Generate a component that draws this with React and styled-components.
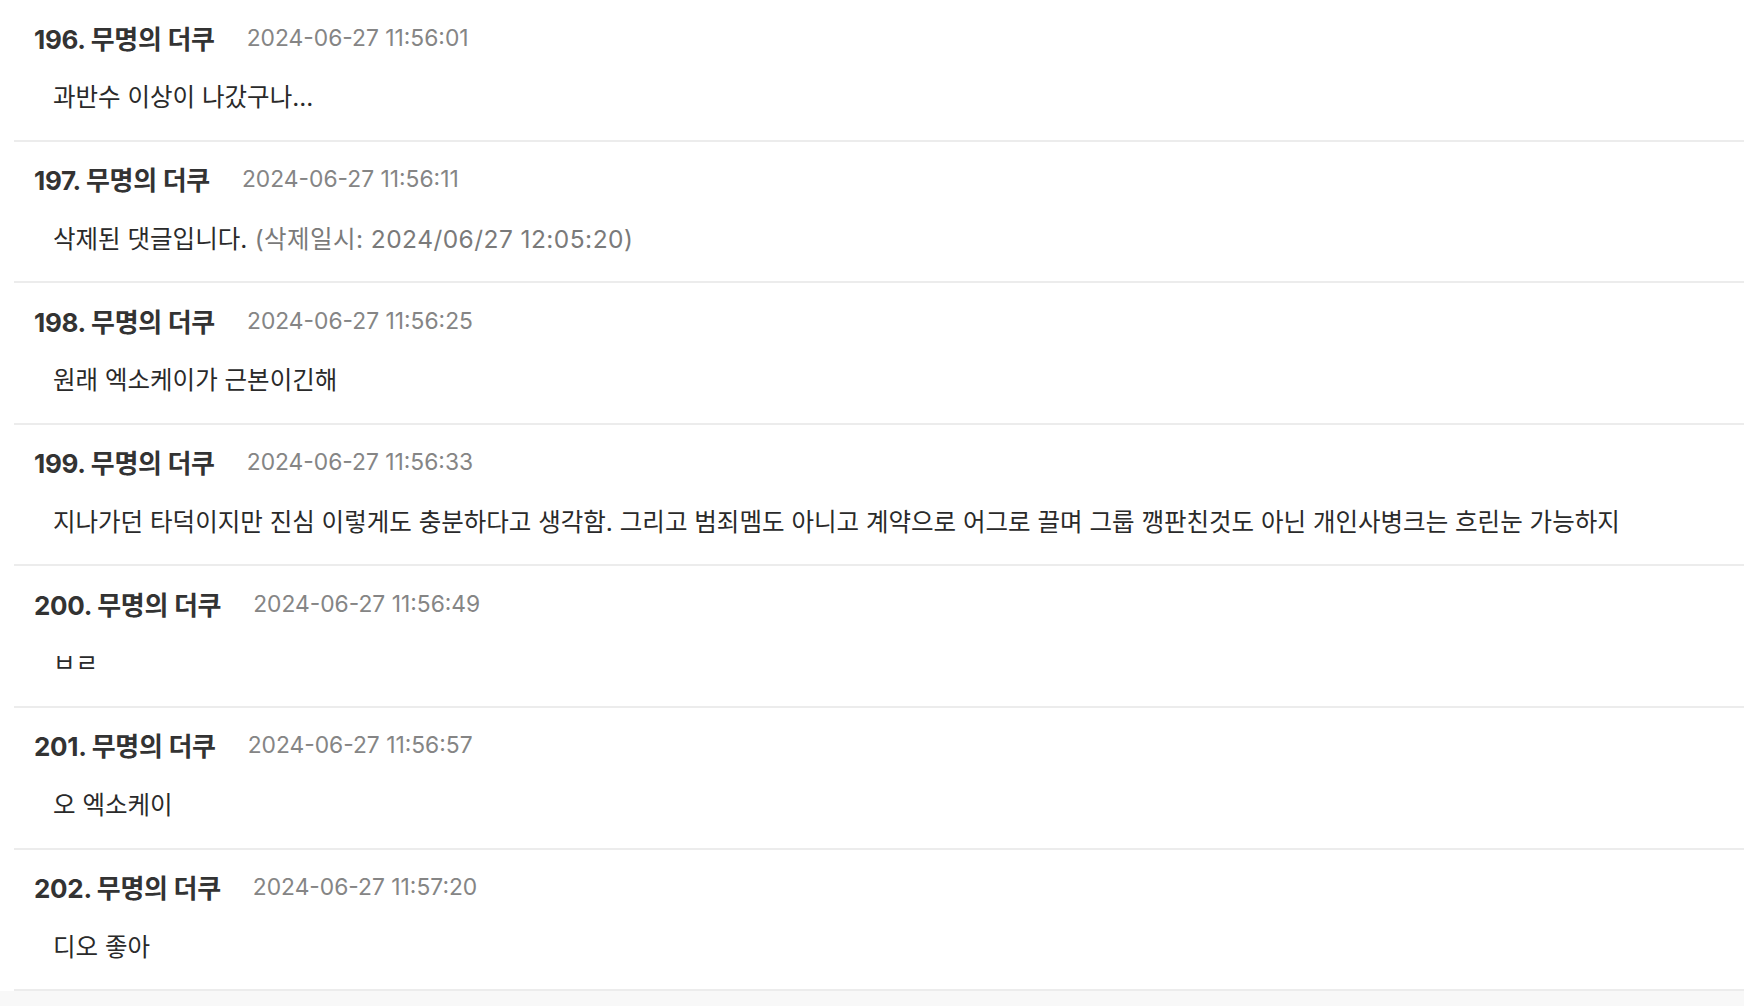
import React from "react";
import styled, { createGlobalStyle } from "styled-components";

const Global = createGlobalStyle`
  html, body { margin: 0; padding: 0; background: #ffffff; }
  body {
    font-family: "Inter", "Noto Sans CJK KR", "Noto Sans", sans-serif;
    color: #333;
    overflow: hidden;
  }
`;

const Page = styled.div`
  display: flex;
  flex-direction: column;
  min-height: 1006px;
  background: #f8f8f8;
`;

const List = styled.ul`
  list-style: none;
  margin: 0;
  padding: 0 0 0 14px;
  background: #fff;
`;

const Item = styled.li`
  display: flex;
  flex-direction: column;
  gap: 24px;
  padding: 19px 0 24.6px 20px;
  border-bottom: 2px solid #ececec;
`;

const Header = styled.div`
  display: flex;
  align-items: center;
  gap: 32px;
  height: 36px;
`;

const Author = styled.span`
  font-family: "Inter", "Noto Sans CJK KR", sans-serif;
  font-weight: 700;
  font-size: 26px;
  color: #333;
  letter-spacing: -0.3px;
`;

const Time = styled.span`
  font-family: "Inter", "Noto Sans CJK KR", sans-serif;
  font-size: 22.8px;
  color: #858585;
`;

const Body = styled.div`
  padding-left: 19px;
  line-height: 36px;
  font-family: "Inter", "Noto Sans CJK KR", sans-serif;
  font-size: 24.5px;
  color: #2a2a2a;
  white-space: nowrap;
`;

const Meta = styled.span`
  color: #7a7a7a;
  letter-spacing: 0.45px;
`;

const Footer = styled.div`
  flex: 1;
  background: #f8f8f8;
`;

const comments = [
  { no: 196, time: "2024-06-27 11:56:01", text: "과반수 이상이 나갔구나..." },
  {
    no: 197,
    time: "2024-06-27 11:56:11",
    text: "삭제된 댓글입니다.",
    meta: "(삭제일시: 2024/06/27 12:05:20)",
  },
  { no: 198, time: "2024-06-27 11:56:25", text: "원래 엑소케이가 근본이긴해" },
  {
    no: 199,
    time: "2024-06-27 11:56:33",
    text:
      "지나가던 타덕이지만 진심 이렇게도 충분하다고 생각함. 그리고 범죄멤도 아니고 계약으로 어그로 끌며 그룹 깽판친것도 아닌 개인사병크는 흐린눈 가능하지",
  },
  { no: 200, time: "2024-06-27 11:56:49", text: "ㅂㄹ" },
  { no: 201, time: "2024-06-27 11:56:57", text: "오 엑소케이" },
  { no: 202, time: "2024-06-27 11:57:20", text: "디오 좋아" },
];

export default function App() {
  return (
    <Page>
      <Global />
      <List>
        {comments.map((c) => (
          <Item key={c.no}>
            <Header>
              <Author>{c.no}. 무명의 더쿠</Author>
              <Time>{c.time}</Time>
            </Header>
            <Body>
              {c.text}
              {c.meta && <Meta> {c.meta}</Meta>}
            </Body>
          </Item>
        ))}
      </List>
      <Footer />
    </Page>
  );
}
